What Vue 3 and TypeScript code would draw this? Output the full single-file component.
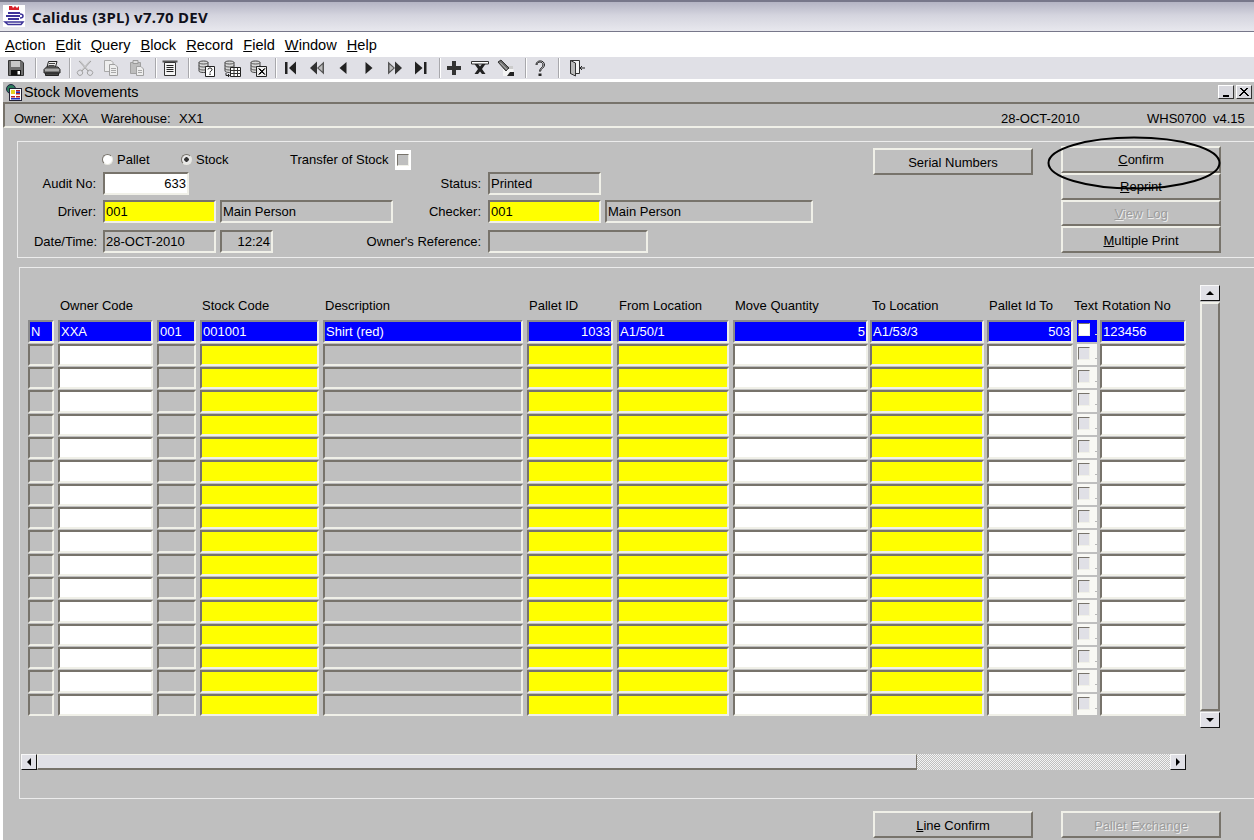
<script setup lang="ts">
type Shape = { d: string; fill?: string; stroke?: string }
type ToolItem = { sep?: boolean; ml?: number; mr?: number; icon?: string }

const menus = ['Action', 'Edit', 'Query', 'Block', 'Record', 'Field', 'Window', 'Help']

const dbShapes: Shape[] = [
  { d: 'M2 3.5C2 1.5 11 1.5 11 3.5V12C11 14 2 14 2 12Z', fill: '#d8d8d8', stroke: '#444' },
  { d: 'M2 3.5C2 5.5 11 5.5 11 3.5M2 6.5C2 8.5 11 8.5 11 6.5M2 9.5C2 11.5 11 11.5 11 9.5', stroke: '#555' },
]

const icons: Record<string, Shape[]> = {
  save: [
    { d: 'M1.5 1.5H14L16.5 4V16.5H1.5Z', fill: '#6e6e6e', stroke: '#333' },
    { d: 'M4 2H13V8H4Z', fill: '#c8c8c8' },
    { d: 'M4 11H14V16.5H4Z', fill: '#111' },
    { d: 'M10.5 12H13V15.5H10.5Z', fill: '#fff' },
  ],
  print: [
    { d: 'M5.5 2.5H14L12.5 8H4Z', fill: '#eee', stroke: '#222' },
    { d: 'M6 4.5H12M5.5 6.5H11.5', stroke: '#444' },
    { d: 'M3.5 8H15L17 10.5V14H1V10.5Z', fill: '#777', stroke: '#222' },
    { d: 'M2 11H16', stroke: '#ddd' },
    { d: 'M2.5 14H15.5V16.5H2.5Z', fill: '#444', stroke: '#222' },
  ],
  cut: [
    { d: 'M3 2L12 12M15 2L6 12', stroke: '#a0a0a0' },
    { d: 'M4 1.5L13 12M14 1.5L5 12', stroke: '#c4c4c4' },
    { d: 'M6 12A2.5 2.5 0 1 1 2 15.5A2.5 2.5 0 1 1 6 12ZM12 12A2.5 2.5 0 1 0 16 15.5A2.5 2.5 0 1 0 12 12Z', stroke: '#a0a0a0' },
  ],
  copy: [
    { d: 'M2.5 1.5H9L11 3.5V12.5H2.5Z', fill: '#eee', stroke: '#a8a8a8' },
    { d: 'M7.5 5.5H13L15.5 8V16.5H7.5Z', fill: '#eee', stroke: '#a0a0a0' },
    { d: 'M9 9.5H14M9 11.5H14M9 13.5H14', stroke: '#a8a8a8' },
  ],
  paste: [
    { d: 'M2.5 3.5H12.5V14.5H2.5Z', fill: '#bdbdbd', stroke: '#a0a0a0' },
    { d: 'M5 1.5H10V4.5H5Z', fill: '#ddd', stroke: '#999' },
    { d: 'M8.5 7.5H13L15.5 10V16.5H8.5Z', fill: '#eee', stroke: '#a0a0a0' },
    { d: 'M10 11.5H14M10 13.5H14', stroke: '#a8a8a8' },
  ],
  list: [
    { d: 'M1.5 1.5H16.5V3.5H1.5Z', fill: '#555' },
    { d: 'M3.5 3.5H14.5V16.5H3.5Z', fill: '#f4f4f4', stroke: '#333' },
    { d: 'M5.5 6.5H12.5M5.5 8.5H12.5M5.5 10.5H12.5M5.5 12.5H12.5', stroke: '#222' },
  ],
  query: [
    ...dbShapes,
    { d: 'M8.5 7.5H17.5V17.5H8.5Z', fill: '#fff', stroke: '#222' },
    { d: 'M11 10.5C11 8.5 15 8.5 15 10.5C15 12 13 12 13 13.5M13 14.5V16', stroke: '#000' },
  ],
  fetch: [
    ...dbShapes,
    { d: 'M7.5 8.5H17.5V17.5H7.5Z', fill: '#fff', stroke: '#222' },
    { d: 'M7.5 11.5H17.5M7.5 14.5H17.5M11 8.5V17.5M14.5 8.5V17.5', stroke: '#333' },
    { d: 'M3 14V16.5H6M5 15L6.5 16.5L5 18', stroke: '#222' },
  ],
  clear: [
    ...dbShapes,
    { d: 'M7.5 7.5H17.5V17.5H7.5Z', fill: '#eee', stroke: '#222' },
    { d: 'M9.5 9.5L15.5 15.5M15.5 9.5L9.5 15.5', stroke: '#000' },
    { d: 'M10.5 9.5L16 15.5M16 9.5L10.5 15.5', stroke: '#000' },
  ],
  first: [
    { d: 'M3 3H5.5V15H3Z', fill: '#222' },
    { d: 'M14 2.5V15.5L7 9Z', fill: '#222' },
  ],
  prev2: [
    { d: 'M9 2.5V15.5L2 9Z', fill: '#333' },
    { d: 'M16 2.5V15.500L9 9Z', fill: '#555' },
    { d: 'M14.5 5.5V12.5L10.500 9Z', fill: '#bbb' },
  ],
  prev: [{ d: 'M12.5 3V15L5.500 9Z', fill: '#222' }],
  next: [{ d: 'M5.5 3V15L12.500 9Z', fill: '#222' }],
  next2: [
    { d: 'M2 2.5V15.500L9 9Z', fill: '#555' },
    { d: 'M3.5 5.5V12.500L7.500 9Z', fill: '#bbb' },
    { d: 'M9 2.5V15.500L16 9Z', fill: '#333' },
  ],
  last: [
    { d: 'M3 2.5V15.500L10.500 9Z', fill: '#222' },
    { d: 'M12 3H14.500V15H12Z', fill: '#222' },
  ],
  plus: [{ d: 'M7 2H11V7H16V11H11V16H7V11H2V7H7Z', fill: '#333' }],
  del: [
    { d: 'M0.500 2.500H17.500V5H0.500Z', fill: '#fff', stroke: '#333' },
    { d: 'M3.500 5H7L9 7.500L11 5H14.500L11 10L14.500 15H11L9 12.500L7 15H3.500L7 10Z', fill: '#222' },
  ],
  erase: [
    { d: 'M6 10H16.500V17H6Z', fill: '#f4f4f4' },
    { d: 'M6 7H16V10H6Z', fill: '#ccc' },
    { d: 'M13 13H17V17H10Z', fill: '#222' },
    { d: 'M1 3L4 1L12 9L9 12Z', fill: '#666', stroke: '#333' },
    { d: 'M3 3.500L10 10.500', stroke: '#ccc' },
  ],
  help: [
    { d: 'M5 6C5 0.500 13.500 0.500 13.500 6C13.500 9 9.500 9.500 9.500 12.500', stroke: '#222' },
    { d: 'M6 6C6 2 12 2 12 6C12 8.500 8.500 9 8.500 12.500', stroke: '#222' },
    { d: 'M7.500 14.500H10.500V17H7.500Z', fill: '#222' },
  ],
  exit: [
    { d: 'M2.500 1.500H11.500V14.500H2.500Z', fill: '#f4f4f4', stroke: '#333' },
    { d: 'M2.500 1.500L7.500 4V17L2.500 14.500Z', fill: '#bbb', stroke: '#333' },
    { d: 'M12 9H17M14 7L12 9L14 11', stroke: '#222' },
  ],
}

const toolbar: ToolItem[] = [
  { icon: 'save' },
  { sep: true, ml: 6, mr: 2 },
  { icon: 'print' },
  { sep: true, ml: 4, mr: 1 },
  { icon: 'cut' },
  { icon: 'copy' },
  { icon: 'paste' },
  { sep: true, ml: 5, mr: 0 },
  { icon: 'list' },
  { sep: true, ml: 5, mr: 3 },
  { icon: 'query' },
  { icon: 'fetch' },
  { icon: 'clear' },
  { sep: true, ml: 4, mr: 1 },
  { icon: 'first' },
  { icon: 'prev2' },
  { icon: 'prev' },
  { icon: 'next' },
  { icon: 'next2' },
  { icon: 'last' },
  { sep: true, ml: 5, mr: 0 },
  { icon: 'plus' },
  { icon: 'del' },
  { icon: 'erase' },
  { sep: true, ml: 6, mr: 0 },
  { icon: 'help' },
  { sep: true, ml: 5, mr: 4 },
  { icon: 'exit' },
]

const headers = ['', 'Owner Code', '', 'Stock Code', 'Description', 'Pallet ID', 'From Location', 'Move Quantity', 'To Location', 'Pallet Id To', 'Text', 'Rotation No']

// field colour per column for the empty rows
const cols = [
  { cls: 'grey' },
  { cls: 'white' },
  { cls: 'grey' },
  { cls: 'yellow' },
  { cls: 'grey' },
  { cls: 'yellow' },
  { cls: 'yellow' },
  { cls: 'white', gap: 'gap2' },
  { cls: 'yellow', gap: 'gap3' },
  { cls: 'white' },
  { cls: 'check' },
  { cls: 'white', gap: 'gap0' },
]

const firstRow = [
  { text: 'N' }, { text: 'XXA' }, { text: '001' }, { text: '001001' }, { text: 'Shirt (red)' },
  { text: '1033', right: true }, { text: 'A1/50/1' }, { text: '5', right: true }, { text: 'A1/53/3' },
  { text: '503', right: true }, { text: '' }, { text: '123456' },
]

const emptyRows = 16
</script>

<template>
  <div class="app">
    <header class="titlebar">
      <svg class="logo" viewBox="0 0 22 22">
        <rect width="22" height="22" fill="#fff" />
        <path d="M6 1h3l1 2 2-2 2 2 2-2v4H6Z" fill="#d8202a" />
        <path d="M5 7h12v2H5ZM3 10h14v2H3ZM5 13h11v2H5Z" fill="#3d3399" />
        <path d="M17 9c4 0 4 4 0 4M2 17h18l-2 2.500H5Z" fill="none" stroke="#3d3399" stroke-width="1.500" />
      </svg>
      <span class="title">Calidus (3PL) v7.70 DEV</span>
    </header>

    <nav class="menubar">
      <span v-for="m in menus" :key="m"><u>{{ m[0] }}</u>{{ m.slice(1) }}</span>
    </nav>

    <div class="toolbar">
      <template v-for="(t, i) in toolbar" :key="i">
        <i v-if="t.sep" class="tool-sep" :style="{ marginLeft: t.ml + 'px', marginRight: t.mr + 'px' }"></i>
        <span v-else class="tool">
          <svg viewBox="0 0 18 18" width="18" height="18">
            <path
                v-for="(s, j) in icons[t.icon!]"
                :key="j"
                :d="s.d"
                :fill="s.fill ?? 'none'"
                :stroke="s.stroke ?? 'none'"
            />
          </svg>
        </span>
      </template>
    </div>

    <main class="window">
      <div class="win-title">
        <svg class="win-icon" viewBox="0 0 17 17">
          <circle cx="6" cy="5" r="4.500" fill="#2a7a5a" stroke="#224" />
          <rect x="4.500" y="4.500" width="12" height="12" fill="#fff" stroke="#223" />
          <path d="M6 6h4v4H6Z" fill="#e8d020" />
          <path d="M11 6h4v1.500h-4ZM11 9h4v1.500h-4ZM11 12h4v1.500h-4ZM6 12h4v1.500H6Z" fill="#c02020" />
          <path d="M11 7.500h4v1.500h-4ZM6 14h9v1.500H6Z" fill="#2030c0" />
        </svg>
        <span class="win-name">Stock Movements</span>
        <span class="win-btn"><i class="min-mark"></i></span>
        <span class="win-btn x-btn">
          <svg viewBox="0 0 10 10" width="10" height="10"><path d="M1 1l8 8M9 1l-8 8M2 1l8 8M8 1l-8 8" stroke="#000" /></svg>
        </span>
      </div>

      <div class="statusbar">
        <span class="s-owner">Owner:</span>
        <span class="s-val1">XXA</span>
        <span class="s-wh">Warehouse:</span>
        <span class="s-val2">XX1</span>
        <span class="s-date">28-OCT-2010</span>
        <span class="s-mod">WHS0700</span>
        <span class="s-ver">v4.15</span>
      </div>

      <section class="form-frame">
        <div class="form-grid">
          <div class="radio-row">
            <label class="radio r1"><i class="dot"></i>Pallet</label>
            <label class="radio r2"><i class="dot on"></i>Stock</label>
            <span class="transfer">Transfer of Stock</span>
            <span class="chk-wrap"><i class="chk"></i></span>
          </div>

          <span class="lbl c1">Audit No:</span>
          <span class="field white audit right">633</span>
          <span class="lbl c4">Status:</span>
          <span class="field grey c5">Printed</span>

          <span class="lbl c1">Driver:</span>
          <span class="field yellow c2">001</span>
          <span class="field grey c3">Main Person</span>
          <span class="lbl c4">Checker:</span>
          <span class="field yellow c5">001</span>
          <span class="field grey c6">Main Person</span>

          <span class="lbl c1 date-lbl">Date/Time:</span>
          <span class="field grey c2">28-OCT-2010</span>
          <span class="field grey c3 time right">12:24</span>
          <span class="lbl c4">Owner's Reference:</span>
          <span class="field grey ref"></span>
        </div>

        <button class="btn serial" type="button">Serial Numbers</button>

        <div class="btn-stack">
          <button class="btn" type="button"><u>C</u>onfirm</button>
          <button class="btn" type="button"><u>R</u>eprint</button>
          <button class="btn off" type="button"><u>V</u>iew Log</button>
          <button class="btn" type="button"><u>M</u>ultiple Print</button>
          <svg class="ellipse" viewBox="0 0 176 56">
            <ellipse cx="88" cy="27" rx="85.500" ry="25.500" fill="none" stroke="#000" stroke-width="2" />
          </svg>
        </div>
      </section>

      <section class="grid-frame">
        <div class="grid-row">
          <div class="table">
            <span v-for="(h, i) in headers" :key="'h' + i" class="th" :class="{ 'th-text': h === 'Text' }">{{ h }}</span>

            <template v-for="(c, i) in cols" :key="'a' + i">
              <span v-if="c.cls === 'check'" class="cell-check active"><i class="chk light"></i></span>
              <span v-else class="field blue" :class="[c.gap, { right: firstRow[i].right }]">{{ firstRow[i].text }}</span>
            </template>

            <template v-for="r in emptyRows" :key="r">
              <template v-for="(c, i) in cols" :key="i">
                <span v-if="c.cls === 'check'" class="cell-check"><i class="chk"></i></span>
                <span v-else class="field" :class="[c.cls, c.gap]"></span>
              </template>
            </template>
          </div>

          <div class="vscroll">
            <span class="sb-btn"><i class="arr up"></i></span>
            <span class="v-track"></span>
            <span class="sb-btn"><i class="arr down"></i></span>
          </div>
        </div>

        <div class="hscroll">
          <span class="sb-btn h"><i class="arr left"></i></span>
          <span class="h-thumb"></span>
          <span class="h-rest"></span>
          <span class="sb-btn h"><i class="arr right"></i></span>
        </div>
      </section>

      <footer class="bottom">
        <button class="btn" type="button"><u>L</u>ine Confirm</button>
        <button class="btn off" type="button">Pallet Exchange</button>
      </footer>
    </main>
  </div>
</template>

<style>
html, body {
  margin: 0;
  overflow: hidden;
  background: #fff;
}
</style>

<style scoped>
.app {
  width: 1254px;
  height: 840px;
  display: flex;
  flex-direction: column;
  overflow: hidden;
  font-family: "Liberation Sans", Arial, sans-serif;
  font-size: 13px;
  color: #000;
}

.titlebar {
  height: 32px;
  flex: none;
  display: flex;
  align-items: center;
  gap: 7px;
  padding-left: 3px;
  background: linear-gradient(#b4b4c4, #d4d4de 45%, #e8e8ee);
  border-top: 2px solid #77778a;
  border-bottom: 1px solid #77778a;
  box-sizing: border-box;
}

.logo {
  width: 22px;
  height: 22px;
  flex: none;
  margin-top: -2px;
}

.title {
  font-family: "Noto Sans", sans-serif;
  font-weight: 700;
  font-size: 15px;
  letter-spacing: .25px;
  color: #10101a;
}

.menubar {
  height: 25px;
  flex: none;
  display: flex;
  align-items: center;
  gap: 10px;
  padding-left: 5px;
  background: #fff;
  font-size: 14.600px;
}

.toolbar {
  height: 22px;
  flex: none;
  display: flex;
  align-items: center;
  padding-left: 3px;
  background: #e0e0e6;
}

.tool {
  width: 26px;
  flex: none;
  display: flex;
  justify-content: center;
}

.tool-sep {
  width: 2px;
  height: 20px;
  flex: none;
  background: #a8a8ac;
  border-right: 1px solid #fff;
  box-sizing: border-box;
}

.window {
  flex: 1;
  margin-top: 3px;
  margin-left: 3px;
  background: #bfbfbf;
  display: flex;
  flex-direction: column;
  min-height: 0;
}

.win-title {
  height: 20px;
  flex: none;
  display: flex;
  align-items: center;
  padding-left: 2px;
  font-size: 14.400px;
}

.win-icon {
  width: 17px;
  height: 17px;
  flex: none;
  margin-right: 2px;
}

.win-name {
  flex: 1;
}

.win-btn {
  width: 16px;
  height: 14px;
  flex: none;
  margin-right: 2px;
  display: flex;
  align-items: flex-end;
  justify-content: center;
  box-sizing: border-box;
  background: #d8d8de;
  border: 1px solid;
  border-color: #fff #333 #333 #fff;
}

.min-mark {
  width: 6px;
  height: 2px;
  margin-bottom: 1px;
  background: #000;
}

.x-btn {
  align-items: center;
}

.statusbar {
  height: 26px;
  flex: none;
  box-sizing: border-box;
  display: flex;
  align-items: center;
  padding: 7px 0 0 0;
  border-top: 2px solid #77736b;
  border-left: 2px solid #77736b;
  border-bottom: 2px solid #f0f0e8;
}

.s-owner { margin-left: 9px; width: 48px; }
.s-val1 { width: 39px; }
.s-wh { width: 78px; }
.s-val2 { width: 822px; }
.s-date { width: 146px; }
.s-mod { width: 66px; }

.form-frame {
  height: 117px;
  flex: none;
  margin: 13px 0 0 14px;
  box-sizing: border-box;
  border: 1px solid #ececec;
  border-right: 0;
  display: flex;
  align-items: flex-start;
}

.form-grid {
  width: 795px;
  flex: none;
  display: grid;
  grid-template-columns: 85px 113px 4px 173px 95px 113px 4px 208px;
  grid-template-rows: 30px 28px 30px 23px;
  align-items: start;
}

.radio-row {
  grid-column: 2 / -1;
  display: flex;
  align-items: center;
  height: 19px;
  margin: 8px 0 0 -1px;
}

.radio {
  display: flex;
  align-items: center;
  gap: 4px;
}

.r1 { width: 79px; }
.r2 { width: 109px; }

.dot {
  width: 11px;
  height: 11px;
  box-sizing: border-box;
  border-radius: 50%;
  background: #fff;
  border: 1px solid;
  border-color: #77736b #e8e8e0 #e8e8e0 #77736b;
}

.dot.on {
  background: radial-gradient(circle, #333 0 2px, #e8e8e8 2.500px);
}

.transfer {
  width: 105px;
}

.chk-wrap {
  width: 16px;
  height: 20px;
  display: flex;
  align-items: center;
  justify-content: center;
  background: #fff;
}

.chk {
  width: 12px;
  height: 12px;
  display: block;
  box-sizing: border-box;
  background: #bfbfbf;
  border: 1px solid;
  border-color: #77736b #f0f0e8 #f0f0e8 #77736b;
}

.lbl {
  height: 23px;
  display: flex;
  align-items: center;
  justify-content: flex-end;
  padding-right: 7px;
  white-space: nowrap;
}

.c1 { grid-column: 1; }
.c2 { grid-column: 2; }
.c3 { grid-column: 4; }
.c4 { grid-column: 5; }
.c5 { grid-column: 6; }
.c6 { grid-column: 8; }

.date-lbl { padding-right: 6px; }

.audit {
  grid-column: 2;
  width: 86px;
}

.time { width: 53px; }

.ref {
  grid-column: 6 / 9;
  width: 160px;
}

.field {
  display: flex;
  align-items: center;
  box-sizing: border-box;
  min-width: 0;
  padding: 0 1px;
  border: 2px solid;
  border-color: #77736b #f0f0e8 #f0f0e8 #77736b;
  white-space: nowrap;
  overflow: hidden;
}

.form-grid .field {
  height: 23px;
}

.field.right {
  justify-content: flex-end;
}

.grey { background: #bfbfbf; }
.white { background: #fff; }
.yellow { background: #ff0; }

.blue {
  background: #00f;
  color: #fff;
  border-color: #8a8a8a #f0f0e8 #f0f0e8 #8a8a8a;
}

.btn {
  width: 160px;
  height: 27px;
  box-sizing: border-box;
  padding: 1px 0 0;
  background: #bfbfbf;
  border: 2px solid;
  border-color: #f0f0e8 #77736b #77736b #f0f0e8;
  font-family: inherit;
  font-size: 13px;
  color: #000;
}

.btn.off {
  color: #9c9c9c;
  text-shadow: 1px 1px 0 #eee;
}

.serial {
  flex: none;
  margin: 6px 0 0 60px;
}

.btn-stack {
  position: relative;
  flex: none;
  margin: 4px 0 0 28px;
  display: flex;
  flex-direction: column;
}

.btn-stack .btn {
  height: 26.750px;
}

.ellipse {
  position: absolute;
  left: -15px;
  top: -10px;
  width: 176px;
  height: 56px;
}

.grid-frame {
  height: 532px;
  flex: none;
  margin: 9px 0 0 16px;
  box-sizing: border-box;
  border: 1px solid #ececec;
  border-right: 0;
  padding: 17px 0 0 8px;
}

.grid-row {
  display: flex;
  align-items: flex-start;
  height: 443px;
}

.table {
  width: 1158px;
  flex: none;
  margin-top: 12px;
  display: grid;
  grid-template-columns: 30px 99px 43px 123px 204px 90px 116px 137px 117px 90px 23px 86px;
  grid-auto-rows: 23.330px;
}

.th {
  padding-left: 2px;
  white-space: nowrap;
  align-self: center;
  margin-top: -6px;
}

.th-text {
  margin-left: -5px;
}

.table .field {
  margin: 0 4px 1px 0;
}

.table .gap2 { margin-right: 2px; }
.table .gap3 { margin-right: 3px; }
.table .gap0 { margin-right: 0; }

.cell-check {
  margin: 0 3px 2px 0;
  background: linear-gradient(#b8b8b8, #b8b8b8) 18px 14px / 2px 1px no-repeat #f8f8f4;
  padding: 3px 0 0 1px;
  box-sizing: border-box;
}

.cell-check .chk {
  width: 12px;
  height: 13px;
  background: #e0e0e6;
}

.cell-check.active {
  background: linear-gradient(#ddd, #ddd) 18px 14px / 2px 1px no-repeat #00f;
}

.cell-check .chk.light {
  background: #fff;
}

.vscroll {
  width: 20px;
  height: 443px;
  flex: none;
  margin-left: 14px;
  display: flex;
  flex-direction: column;
}

.sb-btn {
  height: 16px;
  flex: none;
  box-sizing: border-box;
  display: flex;
  align-items: center;
  justify-content: center;
  background: #e0e0e6;
  border: 1px solid;
  border-color: #f8f8f8 #111 #111 #f8f8f8;
}

.sb-btn.h {
  width: 16px;
}

.v-track {
  flex: 1;
  margin: 1px 0;
  box-sizing: border-box;
  border-left: 2px solid #f0f0e8;
  border-right: 2px solid #77736b;
  border-top: 2px solid #f0f0e8;
  border-bottom: 2px solid #77736b;
}

.arr {
  width: 0;
  height: 0;
  border: 4px solid transparent;
}

.arr.up { border-top: 0; border-bottom-color: #000; }
.arr.down { border-bottom: 0; border-top-color: #000; }
.arr.left { border-left: 0; border-right-color: #000; }
.arr.right { border-right: 0; border-left-color: #000; }

.hscroll {
  width: 1165px;
  height: 16px;
  margin: 26px 0 0 -7px;
  display: flex;
}

.h-thumb {
  width: 880px;
  flex: none;
  box-sizing: border-box;
  background: #e0e0e6;
  border: 1px solid;
  border-color: #f0f0e8 #77736b #77736b #f0f0e8;
  border-bottom-width: 2px;
}

.h-rest {
  flex: 1;
  background: repeating-conic-gradient(#f4f4f4 0 25%, #bfbfbf 0 50%) 0 0 / 2px 2px;
}

.bottom {
  display: flex;
  gap: 28px;
  margin: 12px 0 0 870px;
}
</style>
